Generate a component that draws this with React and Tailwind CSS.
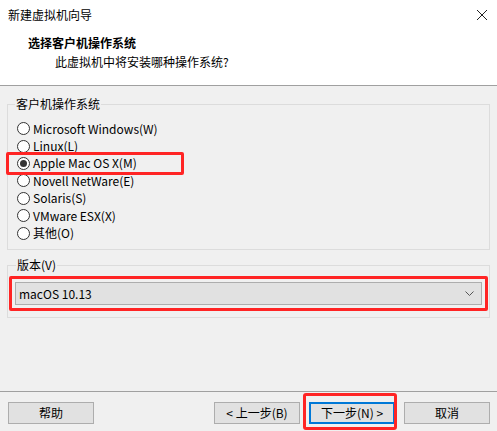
import React, { useState } from "react";

const font = { fontFamily: '"Noto Sans CJK SC", "Microsoft YaHei", sans-serif' };

const systems = [
  "Microsoft Windows(W)",
  "Linux(L)",
  "Apple Mac OS X(M)",
  "Novell NetWare(E)",
  "Solaris(S)",
  "VMware ESX(X)",
  "其他(O)",
];

function Radio({ checked }) {
  return (
    <span className="w-[13px] h-[13px] rounded-full border border-[#333] bg-white flex items-center justify-center shrink-0">
      {checked && <span className="w-[7px] h-[7px] rounded-full bg-[#333]" />}
    </span>
  );
}

function Button({ children, primary }) {
  return (
    <button
      className={
        "w-[86px] h-[22px] text-[12px] leading-none flex items-center justify-center bg-[#e1e1e1] text-black " +
        (primary ? "border-2 border-[#0078d7]" : "border border-[#adadad]")
      }
    >
      {children}
    </button>
  );
}

export default function App() {
  const [os, setOs] = useState(2);

  return (
    <div className="w-[497px] h-[431px] bg-[#f0f0f0] text-black text-[12px] flex flex-col overflow-hidden" style={font}>
      {/* Header */}
      <div className="bg-white h-[86px] border-b border-[#a0a0a0] flex flex-col">
        <div className="flex items-center justify-between pl-[8px] pr-[9px] h-[30px]">
          <span>新建虚拟机向导</span>
          <svg width="12" height="12" viewBox="0 0 12 12">
            <path d="M1 1L11 11M11 1L1 11" stroke="#222" strokeWidth="1" />
          </svg>
        </div>
        <div className="pl-[28px] font-bold leading-[18px] mt-[4px]">选择客户机操作系统</div>
        <div className="pl-[55px] leading-[18px] mt-[1px]">此虚拟机中将安装哪种操作系统?</div>
      </div>

      {/* OS group */}
      <div className="relative mx-[7px] mt-[18px] h-[146px] border border-[#dcdcdc]">
        <span className="absolute -top-[10px] left-[7px] bg-[#f0f0f0] px-[1px] leading-[18px]">客户机操作系统</span>
        <div className="flex flex-col pt-[15px] pl-[9px]">
          {systems.map((s, i) => (
            <label key={s} className="flex items-center gap-[3px] h-[17.4px] cursor-default" onClick={() => setOs(i)}>
              <Radio checked={os === i} />
              <span className="leading-none">{s}</span>
            </label>
          ))}
        </div>
        <div className="absolute left-[-2px] top-[47px] w-[178px] h-[23px] border-[3px] border-[#ff2424] rounded-[2px]" />
      </div>

      {/* Version group */}
      <div className="relative mx-[7px] mt-[15px] h-[53px] border border-[#dcdcdc]">
        <span className="absolute -top-[10px] left-[8px] bg-[#f0f0f0] px-[1px] leading-[18px]">版本(V)</span>
        <div className="mt-[10px] mx-[1px] border-[3px] border-[#ff2424] rounded-[2px] p-[3px]">
          <div className="h-[23px] bg-[#e1e1e1] border border-[#adadad] flex items-center justify-between pl-[3px] pr-[7px]">
            <span>macOS 10.13</span>
            <svg width="9" height="6" viewBox="0 0 9 6">
              <path d="M0.5 0.5L4.5 4.5L8.5 0.5" fill="none" stroke="#555" strokeWidth="1" />
            </svg>
          </div>
        </div>
      </div>

      <div className="flex-1" />

      {/* Footer */}
      <div className="border-t border-[#a0a0a0] h-[40px] flex items-start pt-[10px] px-[8px]">
        <Button>帮助</Button>
        <div className="flex-1" />
        <Button>&lt; 上一步(B)</Button>
        <div className="relative ml-[9px]">
          <Button primary>下一步(N) &gt;</Button>
          <div className="absolute -left-[6px] -right-[2px] -top-[9px] -bottom-[6px] border-[3px] border-[#ff2424] rounded-[3px]" />
        </div>
        <div className="ml-[9px] mr-[-1px]">
          <Button>取消</Button>
        </div>
      </div>
    </div>
  );
}
